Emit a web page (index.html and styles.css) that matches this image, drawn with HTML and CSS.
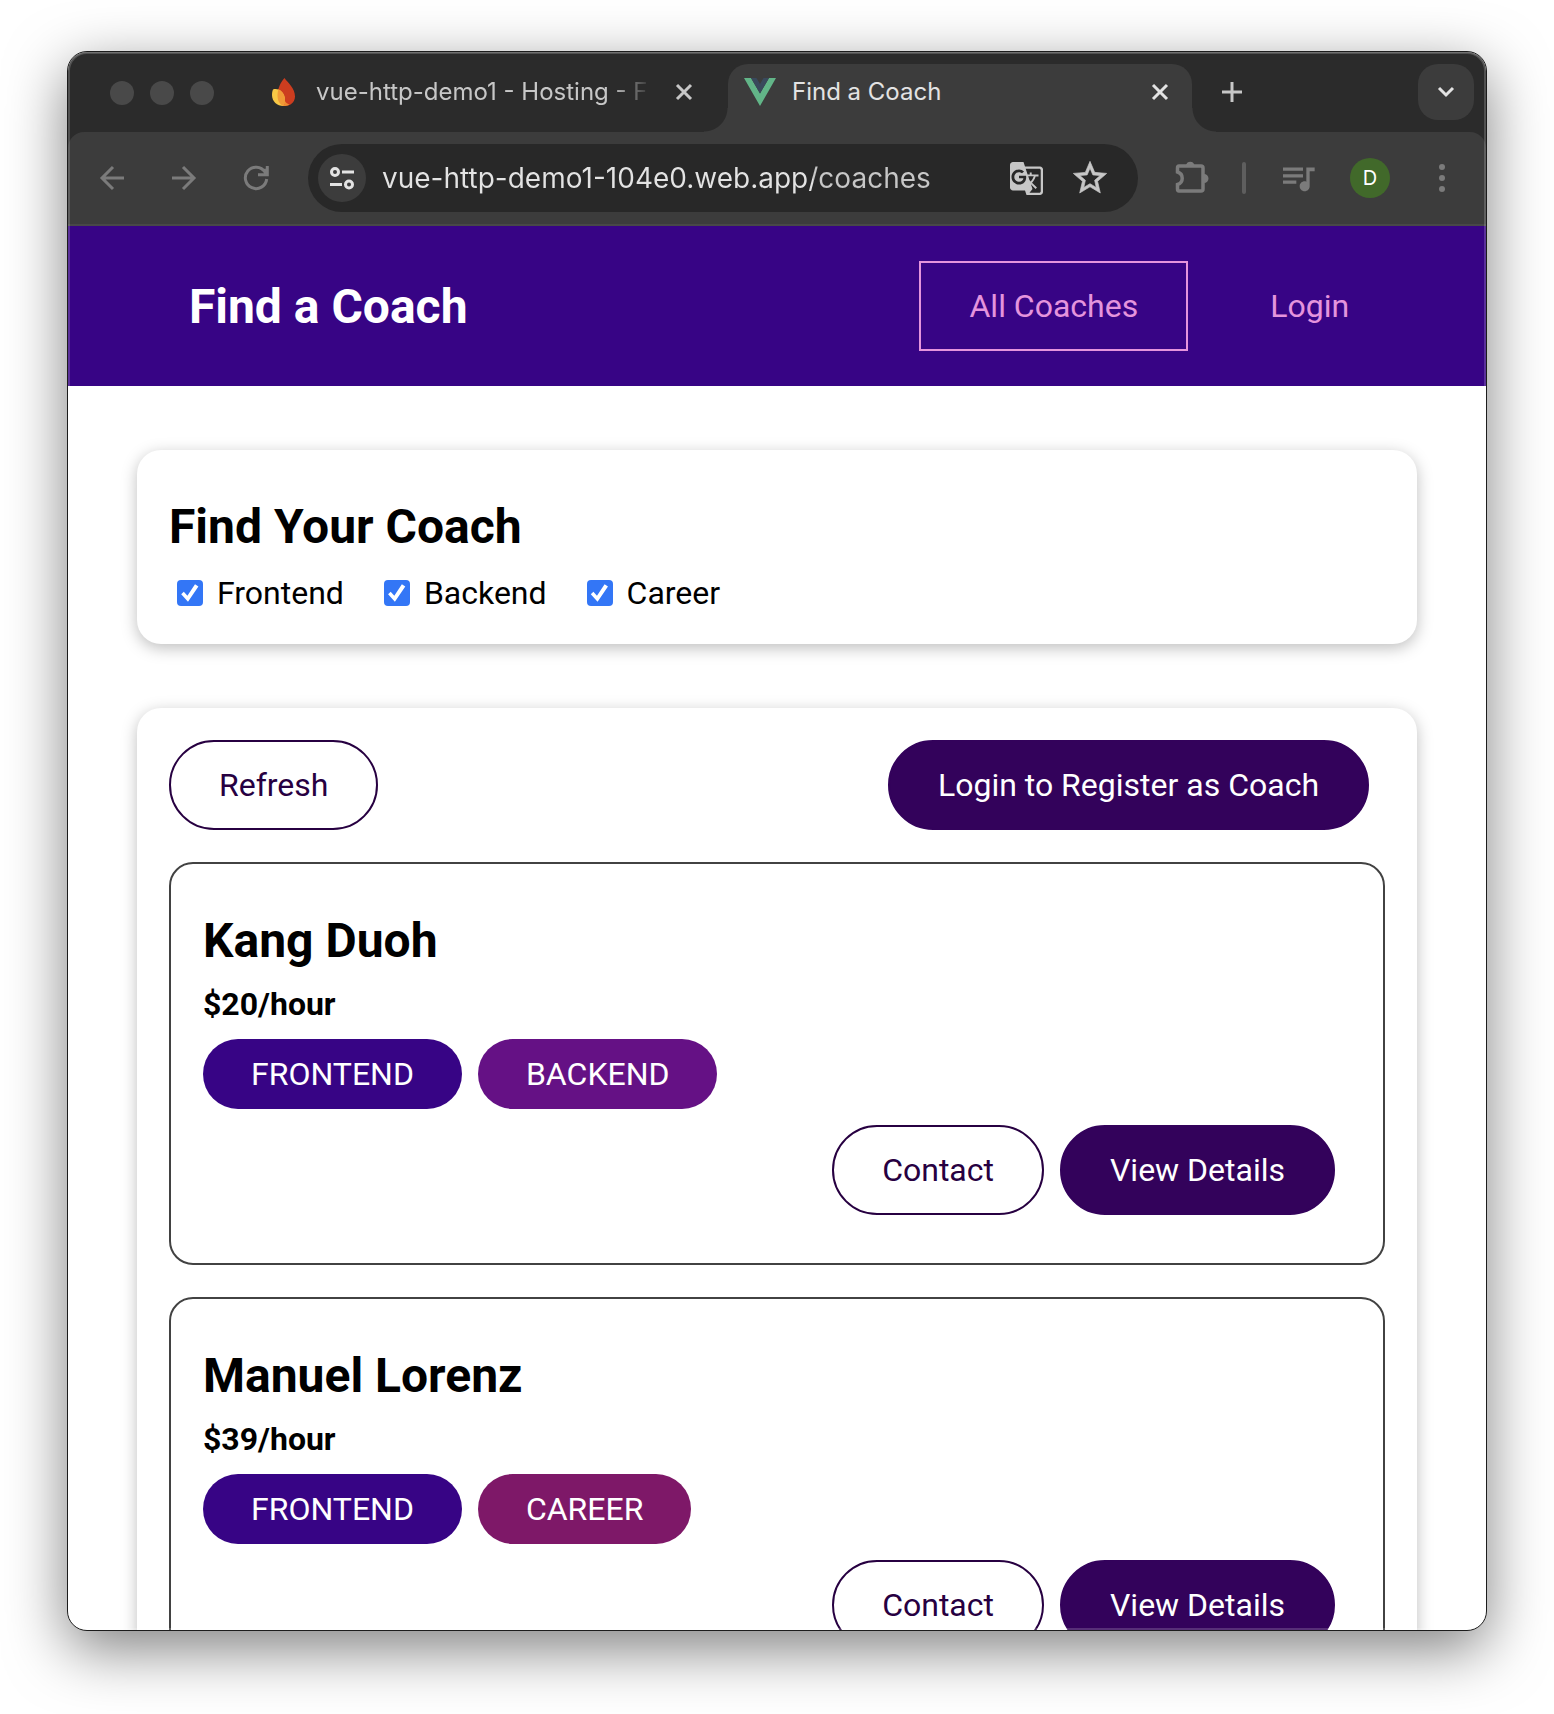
FILE: index.html
```html
<!DOCTYPE html>
<html lang="en">
<head>
<meta charset="utf-8">
<meta name="viewport" content="width=device-width, initial-scale=1">
<title>Find a Coach</title>
<link rel="stylesheet" href="styles.css">
</head>
<body>
<div class="window">
  <div class="chrome">
    <div class="tab-strip">
      <div class="lights"><span class="light"></span><span class="light"></span><span class="light"></span></div>
      <div class="tab">
        <svg class="favicon" width="32" height="28" viewBox="0 0 32 28" aria-hidden="true">
          <path d="M16.500 0C20 5 27 10 27 18.500C27 24 22.500 28 17 28C12 28 9 24 9.500 17C10 9 13 4 16.500 0Z" fill="#cc3d1f"/>
          <path d="M5 11.500C11 9.500 17 15 17 22C17 24.500 16.600 26.500 15.500 28C9 28 4 23.500 4 17C4 15 4.400 13 5 11.500Z" fill="#f8c846"/>
          <path d="M10.400 11.500C14.500 13.500 17 17.500 17 22C17 24.500 16.600 26.500 15.500 28C11 26 9.500 22 9.500 17C9.600 15 9.900 13 10.400 11.500Z" fill="#f09a37"/>
          <path d="M16.800 23Q17 26 15.500 28Q19 28.200 21.500 26.800Q18.500 25.800 16.800 23Z" fill="#ee8a30"/>
        </svg>
        <span class="tab-title tab-title-faded">vue-http-demo1 - Hosting - F</span>
        <button class="tab-close" aria-label="Close tab"><svg width="24" height="24" viewBox="0 0 24 24"><path d="M5 5L19 19M19 5L5 19" stroke="currentColor" stroke-width="3"/></svg></button>
      </div>
      <div class="tab tab-active">
        <svg class="favicon" width="32" height="28" viewBox="0 0 32 28" aria-hidden="true">
          <path d="M0 0H7L16 15.500L25 0H32L16 28Z" fill="#62b588"/>
          <path d="M7 0H12.500L16 6L19.500 0H25L16 15.500Z" fill="#39495c"/>
        </svg>
        <span class="tab-title">Find a Coach</span>
        <button class="tab-close" aria-label="Close tab"><svg width="24" height="24" viewBox="0 0 24 24"><path d="M5 5L19 19M19 5L5 19" stroke="currentColor" stroke-width="3"/></svg></button>
      </div>
      <button class="new-tab" aria-label="New tab"><svg width="24" height="24" viewBox="0 0 24 24"><path d="M12 2V22M2 12H22" stroke="currentColor" stroke-width="3"/></svg></button>
      <button class="tab-search" aria-label="Search tabs"><svg width="24" height="24" viewBox="0 0 24 24"><path d="M5 8L12 15L19 8" fill="none" stroke="currentColor" stroke-width="3"/></svg></button>
    </div>
    <div class="toolbar">
      <div class="history">
        <button class="tool" aria-label="Back"><svg width="48" height="48" viewBox="0 0 48 48"><path d="M36 24H14M25 13L14 24L25 35" fill="none" stroke="currentColor" stroke-width="3"/></svg></button>
        <button class="tool" aria-label="Forward"><svg width="48" height="48" viewBox="0 0 48 48"><path d="M12 24H34M23 13L34 24L23 35" fill="none" stroke="currentColor" stroke-width="3"/></svg></button>
        <button class="tool" aria-label="Reload"><svg width="48" height="48" viewBox="0 0 48 48"><path d="M34.700 25A10.700 10.700 0 1 1 33 18" fill="none" stroke="currentColor" stroke-width="3"/><path d="M35.300 12V20.700H26M32 15L34 20" fill="none" stroke="currentColor" stroke-width="3"/></svg></button>
      </div>
      <div class="address">
        <button class="site-info" aria-label="View site information"><svg width="48" height="48" viewBox="0 0 48 48"><g fill="none" stroke="currentColor" stroke-width="3"><circle cx="17" cy="18" r="3.500"/><circle cx="31" cy="30.500" r="3.500"/><path d="M24 18H36M12 30.500H24"/></g></svg></button>
        <input class="url" type="text" aria-label="Address" value="vue-http-demo1-104e0.web.app/coaches">
        <button class="address-action" aria-label="Translate this page"><svg width="33" height="33" viewBox="1 1 22 22"><path fill="currentColor" d="M21 4H11l-1-3H3c-1.100 0-2 .9-2 2v15c0 1.100.9 2 2 2h8l1 3h9c1.100 0 2-.9 2-2V6c0-1.100-.9-2-2-2zM7 16c-2.760 0-5-2.240-5-5s2.240-5 5-5c1.350 0 2.480.5 3.350 1.300L9.030 8.570c-.38-.36-1.040-.78-2.030-.78-1.740 0-3.150 1.440-3.150 3.210S5.260 14.210 7 14.210c2.010 0 2.840-1.440 2.920-2.410H7v-1.710h4.680c.07.31.12.61.12 1.020C11.800 13.970 9.890 16 7 16zm6.170-5.420h3.700c-.43 1.250-1.110 2.430-2.050 3.470-.31-.35-.6-.72-.86-1.100l-.79-2.370zm8.330 9.920c0 .55-.45 1-1 1H14l2-2.500-1.040-3.100 3.100 3.100.92-.92-3.300-3.250.02-.02c1.130-1.250 1.930-2.690 2.400-4.220H20v-1.300h-4.530V8h-1.290v1.290h-1.440L11.460 5.500h9.040c.55 0 1 .45 1 1v14z"/></svg></button>
        <button class="address-action" aria-label="Bookmark this tab"><svg width="40" height="40" viewBox="0 0 24 24"><path fill="currentColor" stroke="currentColor" stroke-width=".4" d="M22 9.240l-7.190-.62L12 2 9.190 8.630 2 9.240l5.460 4.730L5.820 21 12 17.270 18.180 21l-1.630-7.030L22 9.240zM12 15.400l-3.760 2.270 1-4.280-3.320-2.880 4.380-.38L12 6.100l1.710 4.040 4.380.38-3.320 2.880 1 4.280L12 15.400z"/></svg></button>
      </div>
      <button class="tool" aria-label="Extensions"><svg width="48" height="48" viewBox="0 0 48 48"><path d="M13 12H35Q37 12 37 14V35Q37 37 35 37H13Q11.500 37 11.500 35V30.500A6.500 6.500 0 0 0 11.500 18V14Q11.500 12 13 12Z" fill="none" stroke="currentColor" stroke-width="3.500"/><path d="M20 11A4.500 5 0 0 1 28.500 11ZM38 20A4.500 4.500 0 0 1 38 29Z" fill="currentColor"/></svg></button>
      <span class="divider"></span>
      <button class="tool" aria-label="Media controls"><svg width="40" height="40" viewBox="0 0 24 24"><path fill="currentColor" d="M15 5.700H3v2h12v-2zm0 4H3v2h12v-2zM3 15.500h8v-2H3v2zM17 5.700v8.480c-.31-.11-.65-.18-1-.18-1.660 0-3 1.340-3 3s1.340 3 3 3 3-1.340 3-3V8h3V5.700h-5z"/></svg></button>
      <button class="avatar" aria-label="Profile">D</button>
      <button class="tool" aria-label="Browser menu"><svg width="48" height="48" viewBox="0 0 48 48"><g fill="currentColor"><circle cx="24" cy="13" r="3"/><circle cx="24" cy="24" r="3"/><circle cx="24" cy="35" r="3"/></g></svg></button>
    </div>
  </div>

  <div class="page">
    <header class="site-header">
      <nav class="site-nav">
        <h1 class="brand"><a href="#home">Find a Coach</a></h1>
        <ul class="nav-links">
          <li><a class="nav-link nav-link-current" href="#coaches">All Coaches</a></li>
          <li><a class="nav-link" href="#login">Login</a></li>
        </ul>
      </nav>
    </header>
    <main class="content">
      <section class="card">
        <h2 class="heading">Find Your Coach</h2>
        <div class="filters">
          <label class="filter" for="frontend"><input class="check" type="checkbox" id="frontend" checked>Frontend</label>
          <label class="filter" for="backend"><input class="check" type="checkbox" id="backend" checked>Backend</label>
          <label class="filter" for="career"><input class="check" type="checkbox" id="career" checked>Career</label>
        </div>
      </section>
      <section class="card">
        <div class="controls">
          <button class="button button-outline">Refresh</button>
          <a class="button" href="#login">Login to Register as Coach</a>
        </div>
        <ul class="coaches">
          <li class="coach">
            <h3 class="heading">Kang Duoh</h3>
            <h4 class="rate">$20/hour</h4>
            <div class="badges"><span class="badge badge-frontend">Frontend</span><span class="badge badge-backend">Backend</span></div>
            <div class="actions"><a class="button button-outline" href="#contact">Contact</a><a class="button" href="#details">View Details</a></div>
          </li>
          <li class="coach">
            <h3 class="heading">Manuel Lorenz</h3>
            <h4 class="rate">$39/hour</h4>
            <div class="badges"><span class="badge badge-frontend">Frontend</span><span class="badge badge-career">Career</span></div>
            <div class="actions"><a class="button button-outline" href="#contact">Contact</a><a class="button" href="#details">View Details</a></div>
          </li>
        </ul>
      </section>
    </main>
  </div>
</div>
</body>
</html>
```
FILE: styles.css
```css
* { box-sizing: border-box; }

body {
  margin: 0;
  height: 100vh;
  padding: 51px 67px 83px;
  background: #fff;
  font-family: Roboto, sans-serif;
  font-size: 32px;
  line-height: 38px;
  overflow: hidden;
}

button { border: 0; padding: 0; background: none; font: inherit; color: inherit; cursor: pointer; }
ul { list-style: none; margin: 0; padding: 0; }
a { text-decoration: none; color: inherit; }
svg { display: block; flex: none; }

/* Desktop window */
.window {
  position: relative;
  display: flex;
  flex-direction: column;
  height: 100%;
  border: 1px solid #1c1c1c;
  border-radius: 20px;
  background: #fff;
  overflow: hidden;
  box-shadow: 0 18px 60px rgba(0, 0, 0, .5);
}

.window::after {
  content: "";
  position: absolute;
  inset: 0;
  border-radius: 19px;
  box-shadow: inset 0 0 0 2px rgba(255, 255, 255, .18), inset 0 1px 0 rgba(255, 255, 255, .18);
  pointer-events: none;
}

.chrome {
  flex: none;
  background: #2b2b2b;
  color: #dedede;
  font-family: Inter, sans-serif;
}

.tab-strip {
  display: flex;
  align-items: flex-start;
  gap: 12px;
  height: 80px;
  padding: 12px 12px 0 42px;
}

.lights { display: flex; gap: 16px; margin: 17px 26px 0 0; }
.light { width: 24px; height: 24px; border-radius: 50%; background: #494949; }

.tab {
  position: relative;
  flex: 0 1 464px;
  min-width: 0;
  display: flex;
  align-items: center;
  gap: 16px;
  height: 68px;
  padding: 0 20px 12px 16px;
  color: #c7c7c7;
}

.tab-active {
  border-radius: 20px 20px 0 0;
  background: #3c3c3c;
  color: #e3e3e3;
}

.tab-active::before,
.tab-active::after {
  content: "";
  position: absolute;
  bottom: 0;
  width: 24px;
  height: 24px;
}
.tab-active::before { right: 100%; background: radial-gradient(circle at 0 0, transparent 23px, #3c3c3c 24px); }
.tab-active::after { left: 100%; background: radial-gradient(circle at 100% 0, transparent 23px, #3c3c3c 24px); }

.tab-title { flex: 1; min-width: 0; overflow: hidden; white-space: nowrap; font-size: 24px; line-height: 32px; }
.tab-title-faded {
  -webkit-mask-image: linear-gradient(to left, transparent 4px, #000 44px);
  mask-image: linear-gradient(to left, transparent 4px, #000 44px);
}
.tab-close { color: inherit; }

.new-tab { margin: 16px 0 0 16px; color: #c7c7c7; }
.tab-search {
  display: grid;
  place-items: center;
  width: 56px;
  height: 56px;
  margin-left: auto;
  border-radius: 20px;
  background: #3c3c3c;
  color: #e3e3e3;
}

.toolbar {
  display: flex;
  align-items: center;
  gap: 28px;
  height: 94px;
  padding: 0 20px;
  border-bottom: 2px solid #484848;
  border-radius: 16px 16px 0 0;
  background: #3c3c3c;
  color: #7b7b7b;
}

.history { display: flex; gap: 24px; }
.tool { display: grid; place-items: center; width: 48px; height: 48px; }

.address {
  flex: 1;
  min-width: 0;
  display: flex;
  align-items: center;
  gap: 24px;
  height: 68px;
  padding: 0 28px 0 10px;
  border-radius: 34px;
  background: #282828;
  color: #c7c7c7;
}
.site-info { width: 48px; height: 48px; border-radius: 50%; background: #3c3c3c; color: #e3e3e3; }

/* The host is brighter than the path */
.url {
  flex: 1;
  min-width: 0;
  margin-left: -8px;
  padding: 0;
  border: 0;
  outline: 0;
  background: linear-gradient(to right, #e3e3e3 431px, #c7c7c7 431px);
  -webkit-background-clip: text;
  background-clip: text;
  color: transparent;
  font-family: Inter, sans-serif;
  font-size: 28px;
  line-height: 36px;
}
.address-action { display: grid; place-items: center; width: 40px; height: 40px; }

.divider { width: 4px; height: 32px; border-radius: 2px; background: #5e5e5e; }
.avatar { width: 40px; height: 40px; border-radius: 50%; background: #41692a; color: #fff; font-size: 20px; line-height: 40px; text-align: center; }

/* Web page */
.page { flex: 1; min-height: 0; overflow: hidden; color: #000; }

.site-header { display: flex; justify-content: center; align-items: center; height: 160px; background: #370485; }
.site-nav { display: flex; justify-content: space-between; align-items: center; width: 90%; }
.brand { margin: 0; padding-left: 50px; font-size: 48px; line-height: 57px; color: #fff; }
.nav-links { display: flex; gap: 32px; padding-right: 16px; }
.nav-link { display: block; padding: 24px 48px; border: 2px solid transparent; color: #e594dd; }
.nav-link-current { border-color: #e594dd; }

.content { display: flex; flex-direction: column; gap: 64px; max-width: 1280px; margin: 64px auto; }
.card { padding: 32px; border-radius: 24px; box-shadow: 0 4px 16px rgba(0, 0, 0, .26); }
.heading { margin: 16px 0; font-size: 48px; line-height: 57px; }

.filters { display: flex; gap: 40px; height: 41px; padding-left: 8px; }
.filter { display: flex; align-items: center; gap: 14px; height: 44px; }
.check {
  appearance: none;
  display: grid;
  place-items: center;
  width: 26px;
  height: 26px;
  margin: 0;
  border-radius: 4px;
  background: #fff;
  border: 2px solid #767676;
}
.check:checked { border: 0; background: #3376f6; }
.check:checked::before {
  content: "";
  width: 20px;
  height: 20px;
  background: #fff;
  clip-path: polygon(6% 56%, 19% 44%, 37% 64%, 75% 6%, 92% 17%, 40% 94%);
}

.controls { display: flex; justify-content: space-between; padding-right: 16px; }
.button {
  padding: 24px 48px;
  border: 2px solid #33025b;
  border-radius: 45px;
  background: #33025b;
  color: #fff;
  line-height: 38px;
}
.button-outline { border-color: #270041; background: transparent; color: #270041; }

.coaches { display: grid; gap: 32px; margin-top: 32px; }
.coach { padding: 32px; border: 2px solid #424242; border-radius: 24px; }
.rate { margin: 16px 0; font-size: 32px; line-height: 38px; }
.badges { display: flex; gap: 16px; }
.badge { padding: 16px 48px; border-radius: 35px; color: #fff; text-transform: uppercase; }
.badge-frontend { background: #370485; }
.badge-backend { background: #651185; }
.badge-career { background: #7e1868; }
.actions { display: flex; justify-content: flex-end; gap: 16px; margin: 16px 16px 16px 0; }
```
